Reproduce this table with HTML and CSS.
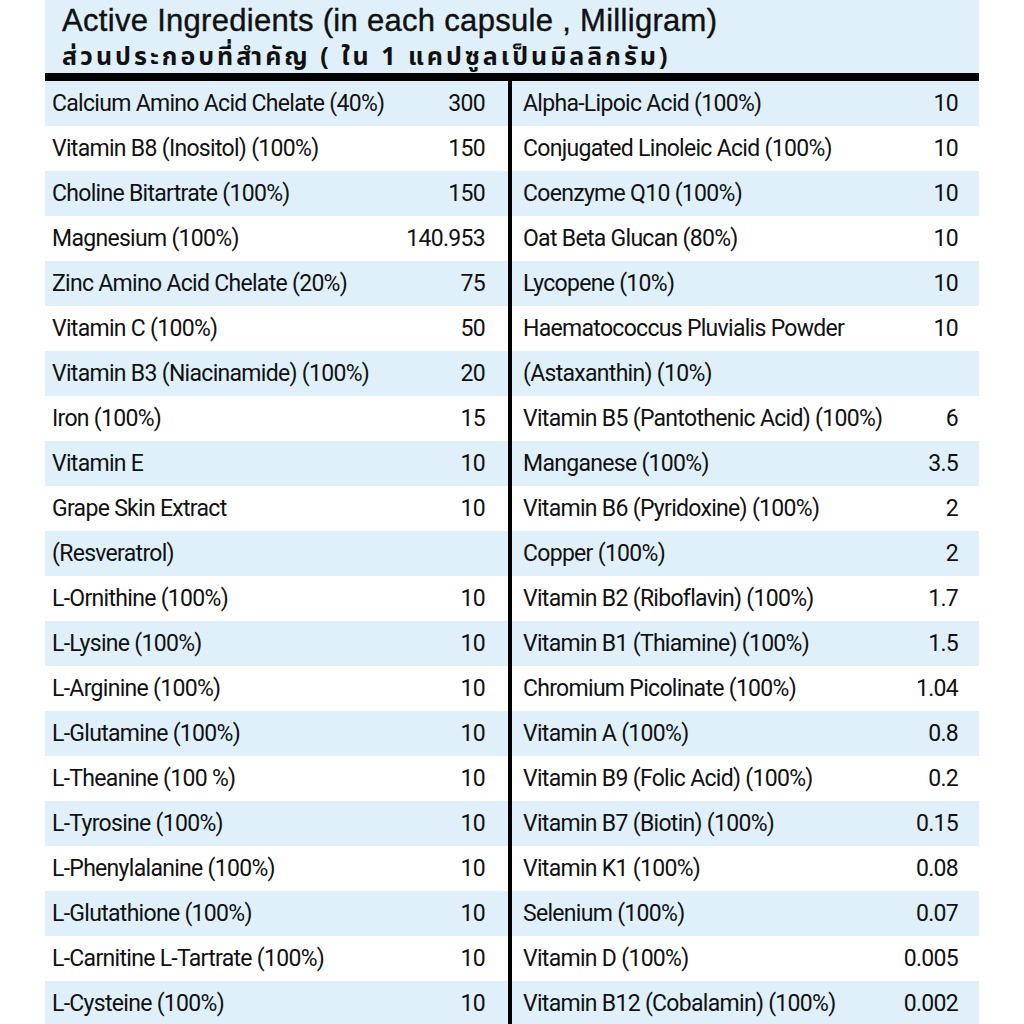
FILE: index.html
```html
<!DOCTYPE html>
<html lang="th">

<head>
    <meta charset="UTF-8">
    <meta name="viewport" content="width=device-width, initial-scale=1.0">
    <title>Active Ingredients</title>
    <link rel="stylesheet" href="styles.css">
</head>

<body>
    <div class="sheet">
        <div class="head">
            <h1 class="title">Active Ingredients (in each capsule , Milligram)</h1>
            <p class="subtitle">ส่วนประกอบที่สำคัญ ( ใน 1 แคปซูลเป็นมิลลิกรัม)</p>
        </div>
        <div class="rows">
            <div class="row"><span class="name">Calcium Amino Acid Chelate (40%)</span><span class="qty">300</span><span class="name right">Alpha-Lipoic Acid (100%)</span><span class="qty">10</span></div>
            <div class="row"><span class="name">Vitamin B8 (Inositol) (100%)</span><span class="qty">150</span><span class="name right">Conjugated Linoleic Acid (100%)</span><span class="qty">10</span></div>
            <div class="row"><span class="name">Choline Bitartrate (100%)</span><span class="qty">150</span><span class="name right">Coenzyme Q10 (100%)</span><span class="qty">10</span></div>
            <div class="row"><span class="name">Magnesium (100%)</span><span class="qty">140.953</span><span class="name right">Oat Beta Glucan (80%)</span><span class="qty">10</span></div>
            <div class="row"><span class="name">Zinc Amino Acid Chelate (20%)</span><span class="qty">75</span><span class="name right">Lycopene (10%)</span><span class="qty">10</span></div>
            <div class="row"><span class="name">Vitamin C (100%)</span><span class="qty">50</span><span class="name right">Haematococcus Pluvialis Powder</span><span class="qty">10</span></div>
            <div class="row"><span class="name">Vitamin B3 (Niacinamide) (100%)</span><span class="qty">20</span><span class="name right">(Astaxanthin) (10%)</span><span class="qty"></span></div>
            <div class="row"><span class="name">Iron (100%)</span><span class="qty">15</span><span class="name right">Vitamin B5 (Pantothenic Acid) (100%)</span><span class="qty">6</span></div>
            <div class="row"><span class="name">Vitamin E</span><span class="qty">10</span><span class="name right">Manganese (100%)</span><span class="qty">3.5</span></div>
            <div class="row"><span class="name">Grape Skin Extract</span><span class="qty">10</span><span class="name right">Vitamin B6 (Pyridoxine) (100%)</span><span class="qty">2</span></div>
            <div class="row"><span class="name">(Resveratrol)</span><span class="qty"></span><span class="name right">Copper (100%)</span><span class="qty">2</span></div>
            <div class="row"><span class="name">L-Ornithine (100%)</span><span class="qty">10</span><span class="name right">Vitamin B2 (Riboflavin) (100%)</span><span class="qty">1.7</span></div>
            <div class="row"><span class="name">L-Lysine (100%)</span><span class="qty">10</span><span class="name right">Vitamin B1 (Thiamine) (100%)</span><span class="qty">1.5</span></div>
            <div class="row"><span class="name">L-Arginine (100%)</span><span class="qty">10</span><span class="name right">Chromium Picolinate (100%)</span><span class="qty">1.04</span></div>
            <div class="row"><span class="name">L-Glutamine (100%)</span><span class="qty">10</span><span class="name right">Vitamin A (100%)</span><span class="qty">0.8</span></div>
            <div class="row"><span class="name">L-Theanine (100 %)</span><span class="qty">10</span><span class="name right">Vitamin B9 (Folic Acid) (100%)</span><span class="qty">0.2</span></div>
            <div class="row"><span class="name">L-Tyrosine (100%)</span><span class="qty">10</span><span class="name right">Vitamin B7 (Biotin) (100%)</span><span class="qty">0.15</span></div>
            <div class="row"><span class="name">L-Phenylalanine (100%)</span><span class="qty">10</span><span class="name right">Vitamin K1 (100%)</span><span class="qty">0.08</span></div>
            <div class="row"><span class="name">L-Glutathione (100%)</span><span class="qty">10</span><span class="name right">Selenium (100%)</span><span class="qty">0.07</span></div>
            <div class="row"><span class="name">L-Carnitine L-Tartrate (100%)</span><span class="qty">10</span><span class="name right">Vitamin D (100%)</span><span class="qty">0.005</span></div>
            <div class="row"><span class="name">L-Cysteine (100%)</span><span class="qty">10</span><span class="name right">Vitamin B12 (Cobalamin) (100%)</span><span class="qty">0.002</span></div>
        </div>
    </div>
</body>

</html>
```

FILE: styles.css
```css
* {
    margin: 0;
    padding: 0;
    box-sizing: border-box;
}

body {
    background-color: white;
    color: #111;
    font-family: Roboto, "Noto Sans", sans-serif;
}

.sheet {
    width: 934px;
    margin-left: 45px;
}

.head {
    height: 81px;
    padding: 5px 0 0 17px;
    background-color: #dff0fb;
    border-bottom: 8px solid black;
}

.title {
    font: normal 31px/32px "Liberation Sans", Arial, sans-serif;
    -webkit-text-stroke: 0.4px #111;
    letter-spacing: 0.3px;
    white-space: nowrap;
}

.subtitle {
    margin-top: 7px;
    font: bold 25px/26px "Noto Sans Thai", "Noto Sans", sans-serif;
    letter-spacing: 3px;
    white-space: nowrap;
}

.row {
    display: grid;
    grid-template-columns: 340px 123px 351px 120px;
    height: 45px;
    font-size: 23px;
    line-height: 45px;
    letter-spacing: -0.7px;
}

.row:nth-child(odd) {
    background-color: #dff0fb;
}

.name {
    padding-left: 7px;
    white-space: nowrap;
}

.right {
    padding-left: 11px;
    border-left: 4px solid black;
}

.qty {
    padding-right: 21px;
    text-align: right;
    white-space: nowrap;
}

.qty:nth-child(2) {
    padding-right: 23px;
}
```
